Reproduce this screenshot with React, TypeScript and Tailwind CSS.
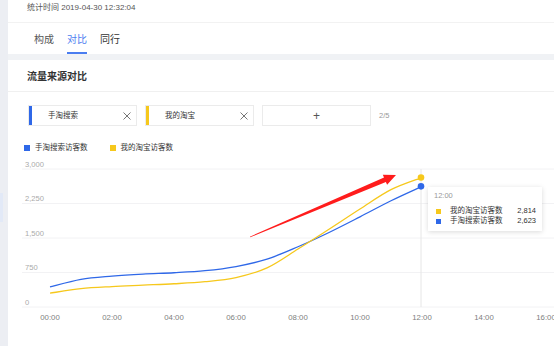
const blue = [435, 600, 670, 715, 745, 790, 880, 1040, 1310, 1620, 1960, 2310, 2623];
const yellow = [300, 400, 445, 475, 505, 550, 640, 850, 1260, 1690, 2130, 2550, 2814];

const px = (h: number) => 50 + h * 31;
const py = (v: number) => 307 - (v * 138) / 3000;

function smoothPath(values: number[]) {
  const pts = values.map((v, i) => [px(i), py(v)]);
  let d = `M${pts[0][0]},${pts[0][1]}`;
  for (let i = 0; i < pts.length - 1; i++) {
    const p0 = pts[i - 1] || pts[i];
    const p1 = pts[i];
    const p2 = pts[i + 1];
    const p3 = pts[i + 2] || p2;
    const c1x = p1[0] + (p2[0] - p0[0]) / 6;
    const c1y = p1[1] + (p2[1] - p0[1]) / 6;
    const c2x = p2[0] - (p3[0] - p1[0]) / 6;
    const c2y = p2[1] - (p3[1] - p1[1]) / 6;
    d += ` C${c1x},${c1y} ${c2x},${c2y} ${p2[0]},${p2[1]}`;
  }
  return d;
}

const grid = [
  { y: 169, label: "3,000" },
  { y: 203.5, label: "2,250" },
  { y: 238, label: "1,500" },
  { y: 272.5, label: "750" },
  { y: 307, label: "0" },
];

const hours = ["00:00", "02:00", "04:00", "06:00", "08:00", "10:00", "12:00", "14:00", "16:00"];

const CloseIcon = () => (
  <svg width="8" height="8" viewBox="0 0 8 8" className="shrink-0">
    <path d="M0.5 0.5L7.5 7.5M7.5 0.5L0.5 7.5" stroke="#666" strokeWidth="0.9" />
  </svg>
);

const Tag = ({ label, color }: { label: string; color: string }) => (
  <div className="flex h-[21px] w-[109px] items-center border border-[#ebebeb] bg-white">
    <div className={`h-full w-[3px] ${color}`} />
    <span className="ml-4 flex-1 text-[7.5px] text-[#333]">{label}</span>
    <div className="mr-[5px]">
      <CloseIcon />
    </div>
  </div>
);

export default function App() {
  // red annotation arrow
  const tail = [250, 237];
  const tip = [396, 175];
  const len = Math.hypot(tip[0] - tail[0], tip[1] - tail[1]);
  const u = [(tip[0] - tail[0]) / len, (tip[1] - tail[1]) / len];
  const n = [-u[1], u[0]];
  const b = [tip[0] - 12 * u[0], tip[1] - 12 * u[1]];
  const at = (p: number[], k: number) => `${p[0] + n[0] * k},${p[1] + n[1] * k}`;
  const arrow = [at(tail, 0.4), at(b, 2.4), at(b, 5.5), `${tip[0]},${tip[1]}`, at(b, -5.5), at(b, -2.4), at(tail, -0.4)].join(" ");

  return (
    <div className="flex h-[346px] w-[554px] overflow-hidden bg-[#f0f2f5] font-['Liberation_Sans','Noto_Sans_CJK_SC',sans-serif]">
      <div className="flex w-2 shrink-0 flex-col bg-[#eceef3]">
        <div className="mt-[193px] h-[29px] w-[3px] bg-[#e2e9f7]" />
      </div>

      <div className="flex flex-1 flex-col gap-[6px]">
        <div className="h-[54px] bg-white">
          <div className="h-[23px] border-b border-[#f2f2f2] pl-[19px] pt-[2px] text-[8px] leading-[12px] text-[#555]">
            统计时间 2019-04-30 12:32:04
          </div>
          <div className="flex gap-[13px] pl-[26px] text-[10px] leading-[14px]">
            <div className="border-b-2 border-transparent pb-[5px] pt-[10px] text-[#555]">构成</div>
            <div className="border-b-2 border-[#4a7df0] pb-[5px] pt-[10px] text-[#4a7df0]">对比</div>
            <div className="border-b-2 border-transparent pb-[5px] pt-[10px] text-[#333]">同行</div>
          </div>
        </div>

        <div className="relative flex flex-1 flex-col bg-white">
          <div className="h-[32px] border-b border-[#f0f0f0] pl-[19px] pt-[10px] text-[10px] font-bold leading-[14px] text-[#333]">
            流量来源对比
          </div>

          <div className="mt-[13px] flex items-center gap-[8px] pl-[20px]">
            <Tag label="手淘搜索" color="bg-[#2f68e8]" />
            <Tag label="我的淘宝" color="bg-[#f6c81c]" />
            <div className="flex h-[21px] w-[109px] items-center justify-center border border-[#ebebeb] text-[12px] font-light leading-none text-[#555]">
              +
            </div>
            <span className="text-[7.5px] text-[#999]">2/5</span>
          </div>

          <div className="mt-[17px] flex h-[10px] items-center pl-[16px] text-[7.5px] text-[#333]">
            <div className="h-[6px] w-[6px] bg-[#2f68e8]" />
            <span className="ml-[5px]">手淘搜索访客数</span>
            <div className="ml-[22px] h-[6px] w-[6px] bg-[#f6c81c]" />
            <span className="ml-[5px]">我的淘宝访客数</span>
          </div>

          <svg className="mt-[2px] block" width="546" height="191" viewBox="8 155 546 191">
            {grid.map((g) => (
              <g key={g.label}>
                <line x1="22" x2="554" y1={g.y} y2={g.y} stroke="#f2f2f4" strokeWidth="1" />
                <text x="25" y={g.y - 2.5} fontSize="7.6" fill="#aaa">
                  {g.label}
                </text>
              </g>
            ))}
            {hours.map((h, i) => (
              <text key={h} x={50 + i * 62} y="320" fontSize="7.8" fill="#808080" textAnchor="middle">
                {h}
              </text>
            ))}
            <line x1="421" x2="421" y1="169" y2="307" stroke="#e6e6e6" strokeWidth="1" />
            <path d={smoothPath(blue)} fill="none" stroke="#2f68e8" strokeWidth="1.3" />
            <path d={smoothPath(yellow)} fill="none" stroke="#f6c81c" strokeWidth="1.3" />
            <circle cx="421" cy={py(2814)} r="3.3" fill="#f6c81c" />
            <circle cx="421" cy={py(2623)} r="3.3" fill="#2f68e8" />
            <polygon points={arrow} fill="#ff1c1c" />
          </svg>

          <div className="absolute left-[420px] top-[127px] w-[114px] bg-white px-[6px] pb-[5px] pt-[4px] text-[7.5px] leading-[10px] shadow-[0_1px_5px_rgba(0,0,0,0.15)]">
            <div className="text-[#999]">12:00</div>
            <div className="mt-[5px] flex items-center">
              <div className="ml-[2px] h-[5px] w-[5px] bg-[#f6c81c]" />
              <span className="ml-[9px] flex-1 text-[#333]">我的淘宝访客数</span>
              <span className="text-[#333]">2,814</span>
            </div>
            <div className="flex items-center">
              <div className="ml-[2px] h-[5px] w-[5px] bg-[#2f68e8]" />
              <span className="ml-[9px] flex-1 text-[#333]">手淘搜索访客数</span>
              <span className="text-[#333]">2,623</span>
            </div>
          </div>
        </div>
      </div>
    </div>
  );
}
